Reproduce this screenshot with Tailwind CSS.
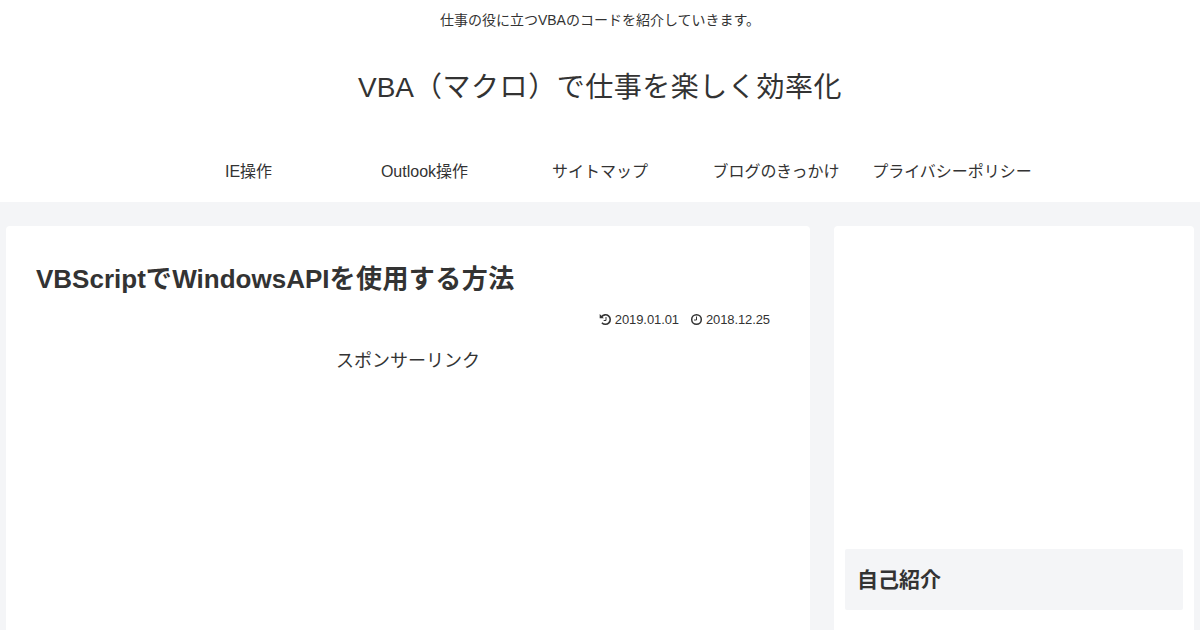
<!DOCTYPE html>
<html lang="ja">
<head>
  <meta charset="UTF-8" />
  <title>VBScriptでWindowsAPIを使用する方法</title>
  <meta name="viewport" content="width=device-width, initial-scale=1.0" />
  <script src="https://cdn.jsdelivr.net/npm/@tailwindcss/browser@4"></script>
</head>
<body class="bg-[#f4f5f7] text-[#333] font-['Liberation_Sans','Noto_Sans_CJK_JP',sans-serif] h-[630px] overflow-hidden">

  <!-- Header -->
  <header class="bg-white h-[202px] text-center">
    <p class="pt-[10px] text-sm leading-[21px]">仕事の役に立つVBAのコードを紹介していきます。</p>
    <h1 class="mt-8 text-[28px] leading-[50px]"><a href="#">VBA<span class="tracking-[0.53px]">（マクロ）で仕事を楽しく効率化</span></a></h1>
    <nav class="mt-[29px] flex justify-center text-base leading-[60px]">
      <a href="#" class="w-44 pl-px">IE操作</a>
      <a href="#" class="w-44 pl-px">Outlook操作</a>
      <a href="#" class="w-44">サイトマップ</a>
      <a href="#" class="w-44">ブログのきっかけ</a>
      <a href="#" class="w-44">プライバシーポリシー</a>
    </nav>
  </header>

  <div class="mt-6 px-1.5 flex gap-6">
    <!-- Article -->
    <main class="w-[804px] h-[404px] bg-white rounded-t px-[30px] pt-8">
      <h2 class="text-[26px] leading-[42px] font-bold">VBScript<span class="tracking-[0.45px]">で</span>WindowsAPI<span class="tracking-[0.45px]">を使用する方法</span></h2>
      <div class="mt-[10px] pr-[10px] flex justify-end gap-3 text-[13px] leading-5 tracking-[-0.1px]">
        <span class="flex items-center gap-1">
          <svg class="w-[11px] h-[11px] -mt-px overflow-visible" viewBox="0 0 11 11" fill="none" stroke="currentColor"><path d="M1.600 2.800A4.750 4.750 0 1 1 1.900 8.700" stroke-width="1.600"/><path d="M-.3 0v4.200h4.200z" fill="currentColor" stroke="none"/><path d="M6 3v3.500H3.700" stroke-width="1"/></svg>
          2019.01.01
        </span>
        <span class="flex items-center gap-1">
          <svg class="w-[11px] h-[11px] -mt-px overflow-visible" viewBox="0 0 11 11" fill="none" stroke="currentColor"><circle cx="5.500" cy="5.500" r="4.800" stroke-width="1.500"/><path d="M5.500 2.500v3.500H3" stroke-width="1"/></svg>
          2018.12.25
        </span>
      </div>
      <p class="mt-[15px] text-lg leading-8 text-center">スポンサーリンク</p>
    </main>

    <!-- Sidebar -->
    <aside class="w-[360px] h-[404px] bg-white rounded-t px-[11px] pt-[323px]">
      <h3 class="bg-[#f4f5f7] rounded-xs h-[61px] px-3 text-[21px] leading-[61px] font-bold">自己紹介</h3>
    </aside>
  </div>

</body>
</html>
